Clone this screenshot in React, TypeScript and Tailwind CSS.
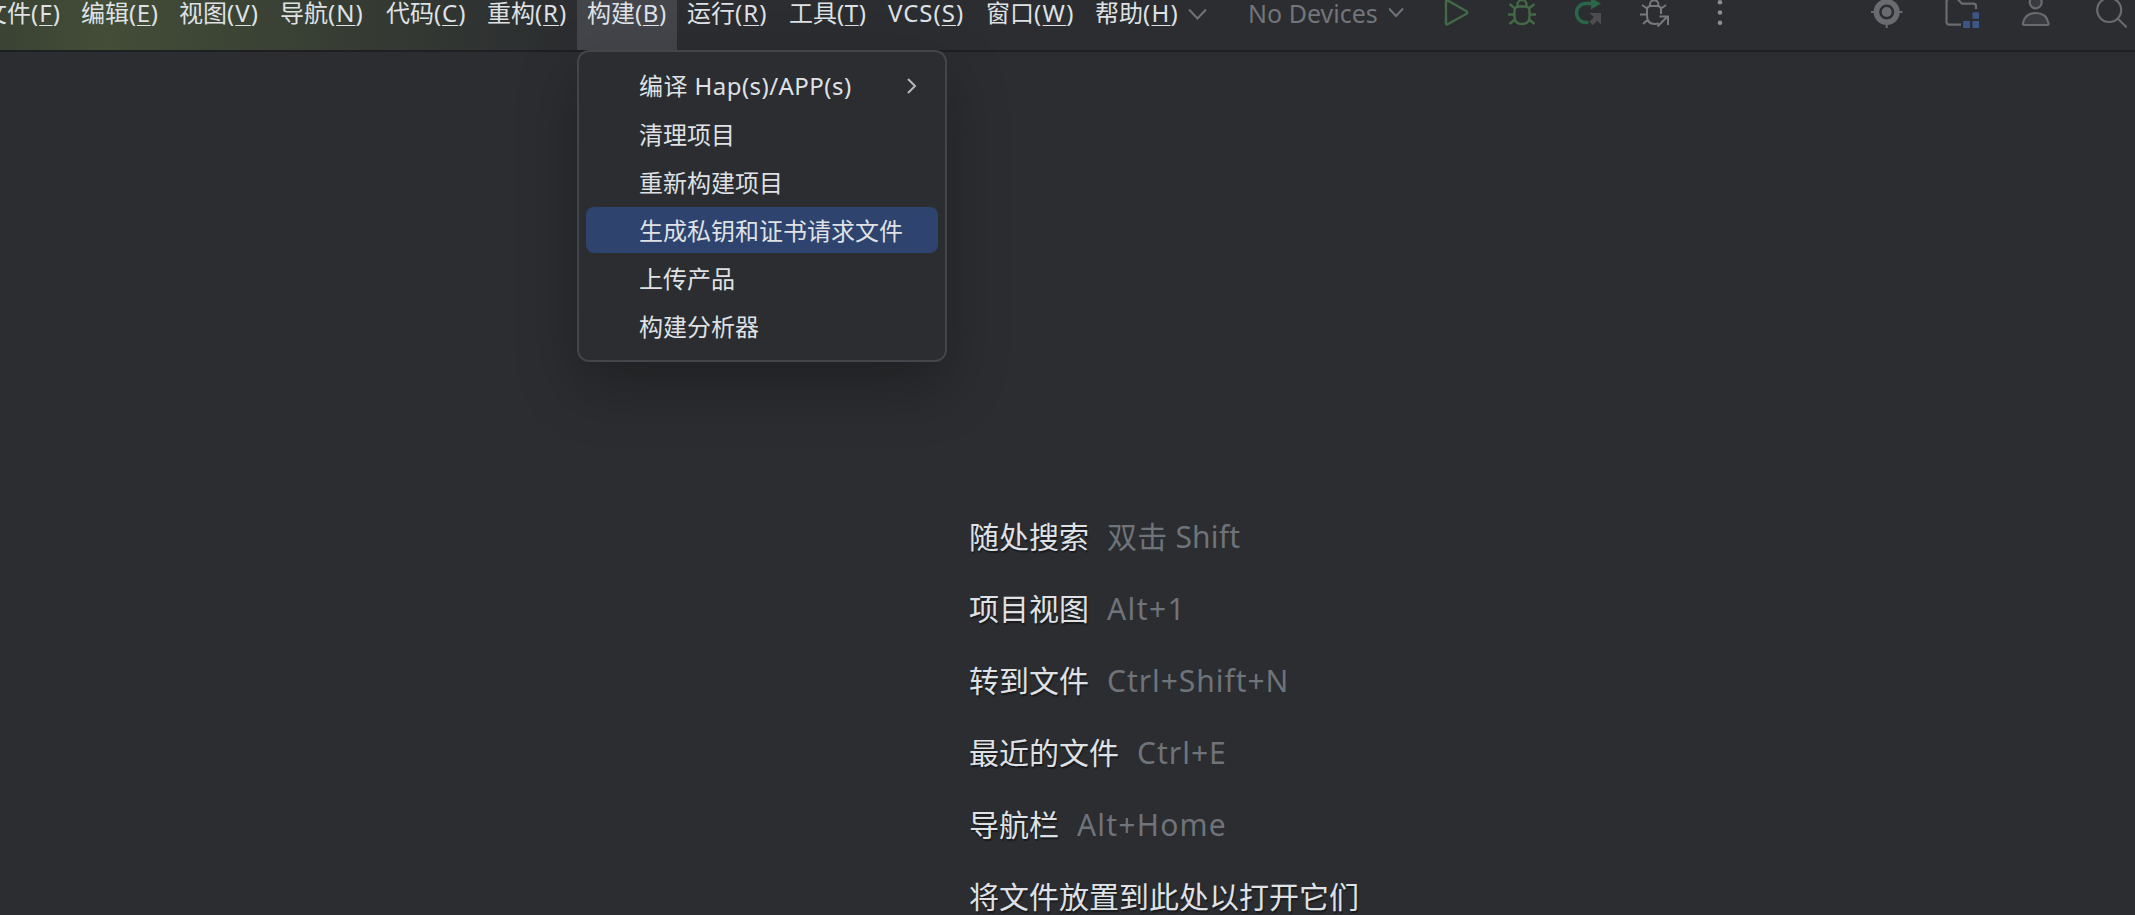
import React, { FC, ReactElement } from 'react';

type MenuEntry = { label: string; hotkey: string; width: string; tracking: string };

const menus: MenuEntry[] = [
	{ label: '文件', hotkey: 'F', width: 'w-[98px]', tracking: 'tracking-[1px]' },
	{ label: '编辑', hotkey: 'E', width: 'w-[98px]', tracking: 'tracking-[0.6px]' },
	{ label: '视图', hotkey: 'V', width: 'w-[101px]', tracking: 'tracking-[1.1px]' },
	{ label: '导航', hotkey: 'N', width: 'w-[106px]', tracking: 'tracking-[1px]' },
	{ label: '代码', hotkey: 'C', width: 'w-[101px]', tracking: 'tracking-[0.9px]' },
	{ label: '重构', hotkey: 'R', width: 'w-[100px]', tracking: 'tracking-[0.9px]' },
	{ label: '构建', hotkey: 'B', width: 'w-[100px]', tracking: 'tracking-[0.6px]' },
	{ label: '运行', hotkey: 'R', width: 'w-[102px]', tracking: 'tracking-[1px]' },
	{ label: '工具', hotkey: 'T', width: 'w-[99px]', tracking: 'tracking-[0.6px]' },
	{ label: 'VCS', hotkey: 'S', width: 'w-[98px]', tracking: 'tracking-[1px]' },
	{ label: '窗口', hotkey: 'W', width: 'w-[109px]', tracking: 'tracking-[1.4px]' },
	{ label: '帮助', hotkey: 'H', width: 'w-[103px]', tracking: 'tracking-[1.3px]' },
];

const buildItems = ['编译 Hap(s)/APP(s)', '清理项目', '重新构建项目', '生成私钥和证书请求文件', '上传产品', '构建分析器'];

const hints = [
	{ label: '随处搜索', keys: '双击 Shift', tracking: 'tracking-[0.2px]' },
	{ label: '项目视图', keys: 'Alt+1', tracking: 'tracking-[1.4px]' },
	{ label: '转到文件', keys: 'Ctrl+Shift+N', tracking: 'tracking-[0.95px]' },
	{ label: '最近的文件', keys: 'Ctrl+E', tracking: 'tracking-[1px]' },
	{ label: '导航栏', keys: 'Alt+Home', tracking: 'tracking-[1.2px]' },
	{ label: '将文件放置到此处以打开它们', keys: '', tracking: '' },
];

const BuildMenu: FC = (): ReactElement => (
	<div className="absolute left-0 top-[50px] z-10 flex h-[312px] w-[370px] flex-col rounded-[12px] border-2 border-[#43454a] bg-[#2b2d30] px-[7px] pt-[11px] shadow-[0_24px_60px_rgba(0,0,0,0.28)]">
		{buildItems.map((item, i) => (
			<div
				key={item}
				className={`mb-[2px] flex h-[46px] shrink-0 items-center justify-between rounded-[8px] pl-[53px] pr-[20px] text-[24px] whitespace-nowrap text-[#dfe1e5] ${
					i === 3 ? 'bg-[#2e436e]' : ''
				} ${i === 0 ? 'tracking-[0.45px]' : 'pt-[1px]'}`}
			>
				<span>{item}</span>
				{i === 0 && (
					<svg width="12" height="18" viewBox="0 0 12 18" fill="none" stroke="#b4b8bf" strokeWidth="2">
						<path d="M2 2l7 7-7 7" />
					</svg>
				)}
			</div>
		))}
	</div>
);

const ToolIcons: FC = (): ReactElement => (
	<div className="flex h-[30px] shrink-0">
		{/* run */}
		<svg className="ml-[38px]" width="28" height="30" fill="none" stroke="#436946" strokeWidth="2.4" strokeLinejoin="round">
			<path d="M3 1.2Q3-.5 4.6.4L23.500 11.300Q25 12.500 23.500 13.700L4.600 24.200Q3 25 3 23.500Z" />
		</svg>
		{/* debug */}
		<svg className="ml-[36px]" width="30" height="30" fill="none" stroke="#436946" strokeWidth="2.4">
			<path d="M7.500 11q0-4.500 4.500-4.500h6q4.500 0 4.500 4.500v5.500q0 7.500-7.500 7.500t-7.500-7.500zM10.500 6.500V4.500a4.500 4.500 0 0 1 9 0v2M7.500 8L2.500 4M22.500 8l5-4M7.500 14.500H1M22.500 14.500H29M8.500 19l-6 5M21.500 19l6 5" />
		</svg>
		{/* rerun */}
		<svg className="ml-[37px]" width="28" height="30" fill="none">
			<path d="M19 3.500h-7a9 9 0 0 0 0 19h1" stroke="#2a6649" strokeWidth="3.500" strokeLinecap="round" />
			<path d="M17-2l10 5.500-10 6z" fill="#2a6649" />
			<path d="M15.500 13H27v11.500l-3.800-3.800-4.500 4.500-3.400-3.400 4.500-4.500z" fill="#4c4d50" />
		</svg>
		{/* attach debugger */}
		<svg className="ml-[38px]" width="31" height="30" fill="none" stroke="#77797e" strokeWidth="2">
			<path d="M21 14V9.500Q21 6 17 6h-6Q7 6 7 10v6q0 8 8 8 2 0 3.500-1M10 6V4.500a4.200 4.200 0 0 1 8.400 0V6M7 8.500L2 5M21 8.500l5-3.500M7 14.500H0M8 19.500l-5 4.500M17.500 26.500l10-10M19.500 16.500H28V25" />
		</svg>
		{/* more */}
		<svg className="ml-[45px]" width="8" height="30" fill="#8b8d92">
			<circle cx="4" cy="2.300" r="2.300" />
			<circle cx="4" cy="12.500" r="2.300" />
			<circle cx="4" cy="22.800" r="2.300" />
		</svg>
	</div>
);

const RightIcons: FC = (): ReactElement => (
	<div className="flex h-[30px] shrink-0">
		<svg width="34" height="30" fill="none" stroke="#696b70">
			<circle cx="16.700" cy="12" r="10.300" strokeWidth="5.500" />
			<circle cx="16.700" cy="12" r="5" fill="#696b70" stroke="none" />
			<path d="M1 12h4M28.500 12h4M16.700 24v4" strokeWidth="2" />
		</svg>
		<svg className="ml-[40px]" width="38" height="30" fill="none" stroke="#696b70" strokeWidth="2.200">
			<path d="M17 24.700H5.500q-3 0-3-3V2q0-3.500 4-3.500h5q1.500 0 2.500 1L18 3.700h11.500q2.500 0 2.500 2.500V9" />
			<path d="M28.500 12.200h6.500v6.500h-6.500zM19.200 21h6.800v7h-6.800zM28.500 21h6.500v7h-6.500z" fill="#3d5688" stroke="none" />
		</svg>
		<svg className="ml-[39px]" width="30" height="30" fill="#393b40" stroke="#696b70" strokeWidth="2.200">
			<circle cx="14.700" cy="2.300" r="6" />
			<path d="M3 25q-1.500 0-1-2 2-10 12.700-10t12.700 10q.5 2-1 2z" />
		</svg>
		<svg className="ml-[44px]" width="38" height="30" fill="none" stroke="#696b70" strokeWidth="2.200" strokeLinecap="round">
			<circle cx="14.200" cy="10" r="12" />
			<path d="M23 18.800l8 8" />
		</svg>
	</div>
);

const App: FC = (): ReactElement => {
	return (
		<div className="flex h-[915px] w-[2135px] flex-col overflow-hidden bg-[#2b2d30] font-['Noto_Sans','Noto_Sans_CJK_SC',sans-serif]">
			<header className="flex h-[52px] shrink-0 border-b-2 border-[#1e1f22] bg-[linear-gradient(90deg,#3a4334_0px,#434d37_105px,#3c4435_235px,#2b2d30_570px)]">
				<nav className="-ml-[27px] flex h-[50px] shrink-0">
					{menus.map((menu, i) => (
						<div key={menu.label} className={`relative h-[50px] shrink-0 ${menu.width} ${i === 6 ? 'bg-[#43454a]' : ''}`}>
							<div className="pl-[10px] text-[24px] leading-[26px] whitespace-nowrap text-[#dfe1e5]">
								<span className={menu.label === 'VCS' ? menu.tracking : ''}>{menu.label}</span>
								<span className={menu.tracking}>
									(<span className="underline decoration-1 underline-offset-[3px]">{menu.hotkey}</span>)
								</span>
							</div>
							{i === 6 && <BuildMenu />}
						</div>
					))}
				</nav>
				<svg className="shrink-0" width="20" height="30" fill="none" stroke="#6f737a" strokeWidth="2">
					<path d="M1 9.500l8.500 9 8.500-9" />
				</svg>
				<div className="ml-[40px] w-[141px] shrink-0 text-[25px] leading-[26px] whitespace-nowrap text-[#73757a]">No Devices</div>
				<svg className="shrink-0" width="16" height="30" fill="none" stroke="#6f737a" strokeWidth="2">
					<path d="M0 8.500l7 7.500 7-7.500" />
				</svg>
				<ToolIcons />
				<div className="ml-[146px]">
					<RightIcons />
				</div>
			</header>

			<main className="ml-[969px] mt-[466px] flex shrink-0 flex-col gap-[34px]">
				{hints.map(hint => (
					<div key={hint.label} className="flex h-[38px] items-center text-[30px] leading-[38px] whitespace-nowrap">
						<span className="text-[#dfe1e5] [text-shadow:1px_2px_1px_#1a1b1d]">{hint.label}</span>
						<span className={`ml-[18px] text-[#6f737a] ${hint.tracking}`}>{hint.keys}</span>
					</div>
				))}
			</main>
		</div>
	);
};
export default App;
